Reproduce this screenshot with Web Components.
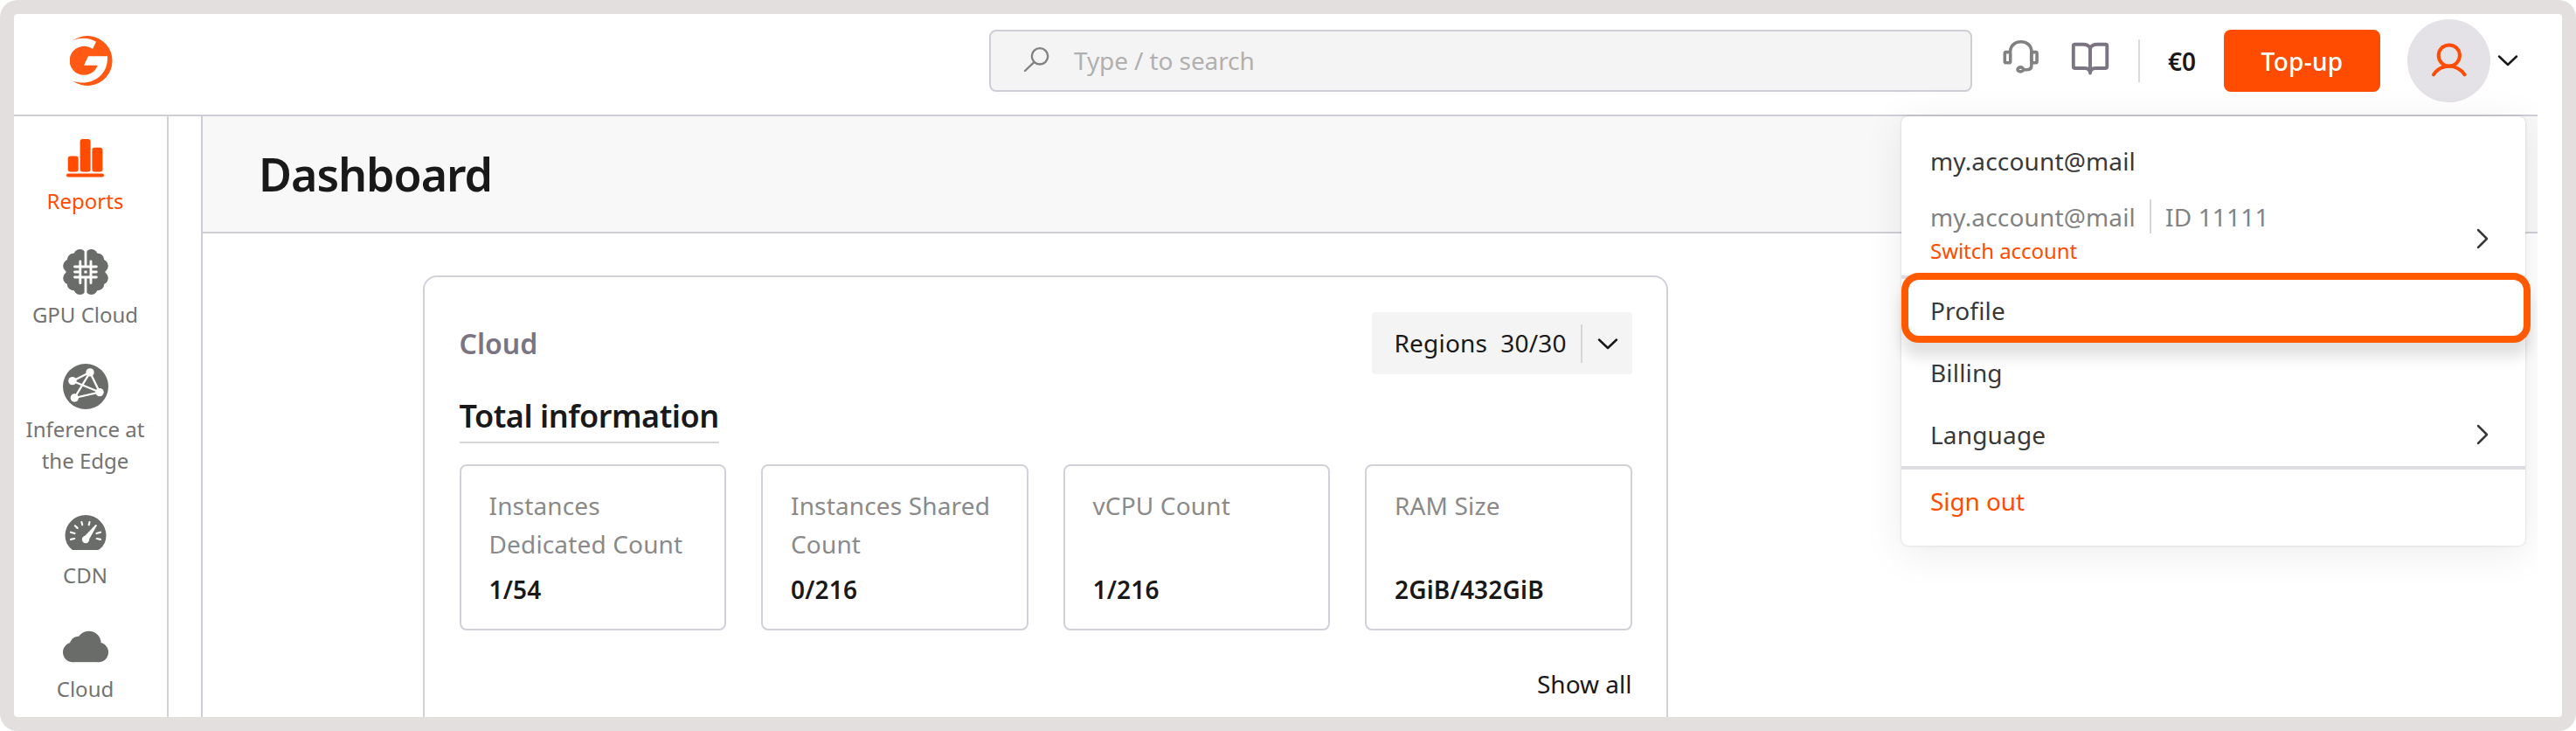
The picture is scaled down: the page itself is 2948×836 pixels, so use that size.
<!DOCTYPE html>
<html lang="en">
<head>
<meta charset="utf-8">
<title>Dashboard</title>
<style>
html, body { margin: 0; height: 100%; background: #fff; }
body { font-family: "Noto Sans", sans-serif; color: #191919; overflow: hidden; }
</style>
</head>
<body>
<app-shell></app-shell>
<script>
function define(name, html) {
  const tpl = document.createElement('template');
  tpl.innerHTML = html;
  customElements.define(name, class extends HTMLElement {
    constructor() {
      super();
      this.attachShadow({ mode: 'open' }).appendChild(tpl.content.cloneNode(true));
    }
  });
}

/* Icons */
const ICONS = {
  logo: ['80 40 50 59', `<path fill="#ff5913" d="M83.5 46.3A28.5 28.5 0 1 1 83.5 92.7C103 99 124 88 123 64.3L101 64.3L96 74.8L111.7 74.8A16.5 16.5 0 1 1 106 56.1L110 47.7C102 43 92 42.6 83.5 46.3Z"/>`],
  search: ['1170 54 32 32', `<g fill="none" stroke="#828282" stroke-width="2.4" stroke-linecap="round"><circle cx="1190" cy="65.3" r="9.2"/><path d="M1183.4 72.2L1173 82"/></g>`],
  headset: ['2290 44 46 42', `<g fill="none" stroke="#828282" stroke-width="3.6" stroke-linejoin="round" stroke-linecap="round"><rect x="2294.3" y="59.6" width="6.4" height="12.2" rx="1.6"/><rect x="2324.7" y="59.6" width="6.4" height="12.2" rx="1.6"/><path d="M2300.6 59C2301 43.9 2324.6 43.9 2324.9 59V74.5Q2324.9 79.7 2319.8 79.7H2316.5"/><ellipse cx="2312.3" cy="79.4" rx="3.3" ry="2.5"/></g>`],
  book: ['2368 46 48 42', `<g fill="none" stroke="#7b7483" stroke-width="3.9" stroke-linejoin="round" stroke-linecap="round"><path d="M2392 54.5Q2389 50.8 2384 50.8H2374.5Q2372.8 50.8 2372.8 52.5V76Q2372.8 78 2374.8 78H2386Q2391.8 78 2392 83.5Q2392.2 78 2398 78H2409.2Q2411.3 78 2411.3 76V52.5Q2411.3 50.8 2409.5 50.8H2400Q2395 50.8 2392 54.5V83"/></g>`],
  user: ['2780 46 46 46', `<g fill="none" stroke="#ff4c00" stroke-width="4" stroke-linecap="round"><circle cx="2802.8" cy="63.5" r="12.1"/><path d="M2785 85.3C2794 72.4 2811.600 72.4 2820.600 85.3"/></g>`],
  reports: ['0 0 52 52', `<g fill="#ff4c00"><rect x="5.700" y="23.500" width="12" height="18" rx="3"/><rect x="19.600" y="4" width="12" height="37.500" rx="3"/><rect x="33.400" y="13.800" width="12" height="27.700" rx="3"/><rect x="4" y="43.600" width="43" height="3.900" rx="1.950"/></g>`],
  gpu: ['0 0 52 52', `<g fill="#6a6c69"><circle cx="19.500" cy="7.500" r="7.400"/><circle cx="32.500" cy="7.500" r="7.400"/><circle cx="12" cy="12" r="7.200"/><circle cx="40" cy="12" r="7.200"/><circle cx="7.800" cy="19" r="7.600"/><circle cx="44.200" cy="19" r="7.600"/><circle cx="7.800" cy="33" r="7.600"/><circle cx="44.200" cy="33" r="7.600"/><circle cx="12" cy="40" r="7.200"/><circle cx="40" cy="40" r="7.200"/><circle cx="19.500" cy="44.500" r="7.400"/><circle cx="32.500" cy="44.500" r="7.400"/><rect x="3.500" y="16" width="45" height="20"/><rect x="11" y="8" width="30" height="36"/></g><path d="M26 0V19.500M26 32.500V52" stroke="#fff" stroke-width="2.800"/><path d="M19.800 14V38.800M32 14V38.800M13.500 20H38.300M13.500 32H38.300M13.500 26H19.800M32 26H38.300" stroke="#fff" stroke-width="2.900" stroke-linecap="round"/><rect x="24.400" y="24.500" width="3.200" height="3" rx=".5" fill="#fff"/>`],
  edge: ['0 0 52 52', `<circle cx="26" cy="26" r="26" fill="#6a6c69"/><path d="M11 19.700L31 9.800L42 32.500L13.300 39L31 9.800M11 19.700L42 32.500" fill="none" stroke="#fff" stroke-width="2.300"/><g fill="#fff"><circle cx="10.900" cy="19.600" r="4.700"/><circle cx="31" cy="9.900" r="4.700"/><circle cx="42" cy="32.600" r="4.700"/><circle cx="13.300" cy="39" r="4.700"/></g>`],
  cdn: ['0 0 52 52', `<path d="M11 46Q2.500 39.500 2.500 29.500A23.500 23.500 0 0 1 49.500 29.500Q49.500 39.500 42 45Q40.800 46 39.500 46H12.500Z" fill="#6a6c69"/><path d="M9 33.900L13.200 33M9 25.700L13.500 27M13.900 18.300L16.600 20.900M21.400 14L22.200 17.200M30.500 14L29.700 17.200M43 33.900L38.800 33M43 25.700L38.500 27" stroke="#fff" stroke-width="2.200" stroke-linecap="round"/><path d="M22.700 32.500L37.200 17.200Q38.800 16.600 38.700 18.200L29.300 35Z" fill="#fff"/><circle cx="26" cy="34" r="4.200" fill="#fff"/>`],
  cloud: ['0 0 52 52', `<g fill="#6a6c69"><circle cx="11.200" cy="33" r="11.200"/><circle cx="40.800" cy="33" r="11.200"/><circle cx="29.700" cy="22.600" r="13.900"/><circle cx="17.500" cy="24.300" r="9.500"/><rect x="11" y="24" width="30" height="20.200"/></g>`],
  down: ['0 0 24 14', `<path d="M2 2.500L12 12L22 2.500" fill="none" stroke="#191919" stroke-width="2.500" stroke-linecap="round" stroke-linejoin="round"/>`],
  right: ['0 0 14 24', `<path d="M2 2L12 12L2 22" fill="none" stroke="#393939" stroke-width="2.500" stroke-linecap="round" stroke-linejoin="round"/>`]
};
customElements.define('ui-icon', class extends HTMLElement {
  connectedCallback() {
    if (this.shadowRoot) return;
    const [box, body] = ICONS[this.getAttribute('name')];
    const [, , w, h] = box.split(' ');
    this.attachShadow({ mode: 'open' }).innerHTML =
      `<style>:host{display:block;flex:none;width:${w}px;height:${h}px}svg{display:block}</style>
       <svg width="${w}" height="${h}" viewBox="${box}" aria-hidden="true">${body}</svg>`;
  }
});

define('search-box', `<style>
:host{display:flex;align-items:center;box-sizing:border-box;width:1125px;height:71px;border:2px solid #cfcdd6;border-radius:8px;background:#f4f4f4;padding-left:36px;gap:27px;color:#b0b0b0;font-size:28px;letter-spacing:-.1px}
</style><ui-icon name="search"></ui-icon><span><slot></slot></span>`);

define('app-header', `<style>
:host{display:flex;align-items:center;box-sizing:border-box;height:117px;padding-bottom:9px;padding-left:64px;padding-right:22px;border-bottom:2px solid #cfcdd6;font-size:28px}
search-box{margin-left:1002px}
.head{margin:-9px 0 0 33px}.book{margin:-4px 0 0 32px}
i{width:2px;height:49px;background:#dadada;margin-left:31px}
b{font-weight:600;margin-left:32px;width:33px;padding-top:1px}
.btn{box-sizing:border-box;width:179px;height:71px;padding-top:1px;border-radius:8px;background:#ff4c00;color:#fff;font-weight:500;display:flex;align-items:center;justify-content:center;margin-left:31px;letter-spacing:.28px}
.avatar{width:95px;height:95px;border-radius:50%;background:#e4e2e7;display:flex;align-items:center;justify-content:center;margin-left:31px}
.chev{margin-left:8px}
</style>
<ui-icon name="logo"></ui-icon>
<search-box>Type / to search</search-box>
<ui-icon class="head" name="headset"></ui-icon>
<ui-icon class="book" name="book"></ui-icon>
<i></i><b>€0</b>
<div class="btn">Top-up</div>
<div class="avatar"><ui-icon name="user"></ui-icon></div>
<ui-icon class="chev" name="down"></ui-icon>`);

define('nav-item', `<style>
:host{display:flex;flex-direction:column;align-items:center;gap:5px;font-size:24px;line-height:36px;text-align:center;color:#737373}
:host([active]){color:#ff4c00}
</style><slot name="icon"></slot><span><slot></slot></span>`);

define('side-nav', `<style>
:host{display:flex;flex-direction:column;gap:37.7px;box-sizing:border-box;width:177px;padding:21.500px 12px 0 0;border-right:2px solid #d2d0d9;flex:none;overflow:hidden}
</style>
<nav-item active><ui-icon slot="icon" name="reports"></ui-icon>Reports</nav-item>
<nav-item><ui-icon slot="icon" name="gpu"></ui-icon>GPU Cloud</nav-item>
<nav-item><ui-icon slot="icon" name="edge"></ui-icon>Inference at<br>the Edge</nav-item>
<nav-item><ui-icon slot="icon" name="cdn"></ui-icon>CDN</nav-item>
<nav-item><ui-icon slot="icon" name="cloud"></ui-icon>Cloud</nav-item>`);

define('page-title', `<style>
:host{display:flex;align-items:center;box-sizing:border-box;height:134px;padding-left:64px;padding-bottom:2px;background:#f8f8f8;border-bottom:2px solid #cfcdd6;font-size:52px;font-weight:600;letter-spacing:-1.05px}
</style><span><slot></slot></span>`);

define('region-select', `<style>
:host{display:flex;align-items:center;box-sizing:border-box;width:298px;height:71px;padding-left:26px;border-radius:4px;background:#f4f4f4;font-size:28px;letter-spacing:.2px}
span{margin-top:-1px}
.n{margin-left:15px}
i{width:2px;height:44px;background:#d6d6d6;margin:0 17px 0 16px}
</style><span>Regions</span><span class="n">30/30</span><i></i><ui-icon name="down"></ui-icon>`);

define('stat-card', `<style>
:host{display:flex;flex-direction:column;justify-content:space-between;box-sizing:border-box;height:190px;padding:24px 20px 25px 32px;border:2px solid #d2d0d9;border-radius:8px;font-size:28px;line-height:43.500px}
.l{color:#8a8a8a;letter-spacing:.15px}
.v{font-weight:600;line-height:40px;letter-spacing:.2px}
</style><div class="l"><slot></slot></div><div class="v"><slot name="value"></slot></div>`);

define('cloud-panel', `<style>
:host{display:block;box-sizing:border-box;width:1425px;height:640px;margin:48px 0 0 252px;padding:40px 39.500px 0;border:2px solid #d2d0d9;border-radius:16px}
header{display:flex;align-items:center;justify-content:space-between;height:71px}
h2{margin:-1px 0 0;font-size:32px;font-weight:600;color:#7b7483}
h3{display:block;width:max-content;margin:19px 0 0;font-size:36px;font-weight:600;line-height:58px;letter-spacing:-.48px;border-bottom:2px solid #d6d6d6}
.g{display:grid;grid-template-columns:repeat(4,1fr);gap:40px;margin-top:24px}
.all{margin-top:41px;text-align:right;font-size:28px;line-height:40px}
</style>
<header><h2>Cloud</h2><region-select></region-select></header>
<h3>Total information</h3>
<div class="g">
<stat-card>Instances<br>Dedicated Count<span slot="value">1/54</span></stat-card>
<stat-card>Instances Shared<br>Count<span slot="value">0/216</span></stat-card>
<stat-card>vCPU Count<span slot="value">1/216</span></stat-card>
<stat-card>RAM Size<span slot="value">2GiB/432GiB</span></stat-card>
</div>
<div class="all">Show all</div>`);

define('menu-row', `<style>
:host{display:flex;align-items:center;justify-content:space-between;box-sizing:border-box;height:71.300px;padding:0 42px 0 33px;color:#393939}
:host([danger]){color:#ff4c00;letter-spacing:-.1px}
</style><span><slot></slot></span><slot name="end"></slot>`);

define('account-menu', `<style>
:host{display:block;box-sizing:border-box;width:714px;height:491px;padding:15px 0;background:#fff;border-radius:8px;font-size:28px;letter-spacing:.16px;box-shadow:0 0 3px rgba(0,0,0,.16),0 8px 48px rgba(0,0,0,.08)}
.acc{display:flex;align-items:center;justify-content:space-between;box-sizing:border-box;height:95.700px;padding:5px 42px 9px 33px}
.line{display:flex;align-items:center;height:39px;color:#828282}
.line i{width:2px;height:39px;background:#d6d6d6;margin:0 16px}
.sw{font-size:24px;line-height:30px;margin-top:5px;color:#ff4c00;letter-spacing:-.05px}
.acc ui-icon{margin-top:16px}
hr{border:0;margin:0;height:4px;background:#dfdbe3}
</style>
<menu-row>my.account@mail</menu-row>
<div class="acc"><div><div class="line"><span>my.account@mail</span><i></i><span>ID 11111</span></div><div class="sw">Switch account</div></div><ui-icon name="right"></ui-icon></div>
<hr>
<menu-row>Profile</menu-row>
<menu-row>Billing</menu-row>
<menu-row>Language<ui-icon slot="end" name="right"></ui-icon></menu-row>
<hr>
<menu-row danger>Sign out</menu-row>`);

define('focus-ring', `<style>
:host{display:block;box-sizing:border-box;width:720px;height:80px;border:8px solid #ff5a00;border-radius:20px;box-shadow:0 16px 16px rgba(0,0,0,.12)}
</style>`);

define('app-shell', `<style>
:host{display:block;box-sizing:border-box;width:2948px;height:836px;border-radius:20px;background:#e3dfde;padding:16px;overflow:hidden}
.win{height:804px;background:#fff;border-radius:4px;overflow:hidden}
.app{position:relative;width:2888px;height:804px;overflow:hidden}
.body{display:flex;height:687px}
main{flex:1;min-width:0;margin-left:37px;border-left:2px solid #cfcdd6;overflow:hidden}
account-menu{position:absolute;left:2160px;top:117px}
focus-ring{position:absolute;left:2160px;top:296px}
</style>
<div class="win"><div class="app">
<app-header></app-header>
<div class="body">
<side-nav></side-nav>
<main><page-title>Dashboard</page-title><cloud-panel></cloud-panel></main>
</div>
<account-menu></account-menu>
<focus-ring></focus-ring>
</div></div>`);
</script>
</body>
</html>
